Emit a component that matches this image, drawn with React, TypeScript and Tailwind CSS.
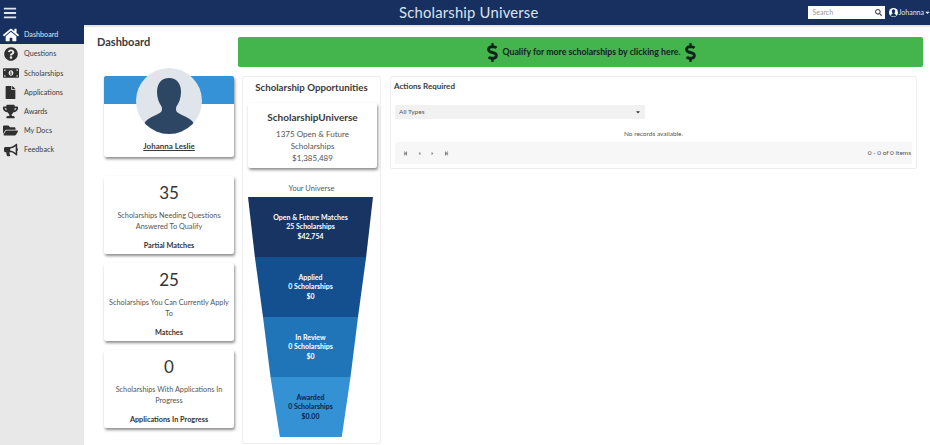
import {
  FaBars,
  FaBullhorn,
  FaDollarSign,
  FaFile,
  FaFolderOpen,
  FaHome,
  FaMoneyBillAlt,
  FaQuestionCircle,
  FaSearch,
  FaTrophy,
  FaCaretDown,
  FaStepBackward,
  FaCaretLeft,
  FaCaretRight,
  FaStepForward,
} from "react-icons/fa"

const navItems = [
  { label: "Dashboard", icon: FaHome, size: "text-[16px]" },
  { label: "Questions", icon: FaQuestionCircle, size: "text-[14px]" },
  { label: "Scholarships", icon: FaMoneyBillAlt, size: "text-[16px]" },
  { label: "Applications", icon: FaFile, size: "text-[13px]" },
  { label: "Awards", icon: FaTrophy, size: "text-[15px]" },
  { label: "My Docs", icon: FaFolderOpen, size: "text-[15px]" },
  { label: "Feedback", icon: FaBullhorn, size: "text-[14px]" },
]

const statCards = [
  {
    count: "35",
    text: "Scholarships Needing Questions Answered To Qualify",
    label: "Partial Matches",
  },
  {
    count: "25",
    text: "Scholarships You Can Currently Apply To",
    label: "Matches",
  },
  {
    count: "0",
    text: "Scholarships With Applications In Progress",
    label: "Applications In Progress",
  },
]

const funnel = [
  {
    lines: ["Open & Future Matches", "25 Scholarships", "$42,754"],
    className:
      "bg-[#183462] text-white [clip-path:polygon(0_0,100%_0,94.5%_100%,5.5%_100%)]",
  },
  {
    lines: ["Applied", "0 Scholarships", "$0"],
    className:
      "bg-[#14508f] text-white [clip-path:polygon(5.5%_0,94.5%_0,88%_100%,12%_100%)]",
  },
  {
    lines: ["In Review", "0 Scholarships", "$0"],
    className:
      "bg-[#2075b8] text-white [clip-path:polygon(12%_0,88%_0,82%_100%,18%_100%)]",
  },
  {
    lines: ["Awarded", "0 Scholarships", "$0.00"],
    className:
      "bg-[#3391d4] text-[#10233f] [clip-path:polygon(18%_0,82%_0,75%_100%,25.500%_100%)]",
  },
]

const cardShadow = "shadow-[1px_2px_3px_rgba(0,0,0,0.45)]"

const App = () => {
  return (
    <div className="flex h-[445px] w-[930px] flex-col overflow-hidden bg-white font-['Lato',sans-serif] text-[#444]">
      <header className="flex h-[25px] shrink-0 items-center bg-[#17305f] text-white">
        <FaBars className="ml-[3px] text-[14px] text-[#dfe6f0]" />
        <div className="ml-[382px] text-[14.800px] leading-none tracking-[0.2px] text-[#dbe3ee]">
          Scholarship Universe
        </div>
        <div className="ml-auto flex items-center">
          <div className="flex h-[13px] w-[77px] items-center justify-between bg-white pl-[5px] pr-[3px]">
            <span className="text-[7px] text-[#999]">Search</span>
            <FaSearch className="text-[7px] text-[#444]" />
          </div>
          <svg viewBox="0 0 10 10" className="ml-[4px] h-[9px] w-[9px]">
            <circle cx="5" cy="5" r="5" fill="#fff" />
            <path d="M5 1.5c1.2 0 1.9 1 1.9 2.2 0 .9-.4 1.6-.8 2l.1.8L8.5 8A5 5 0 0 1 1.5 8l2.3-1.5.1-.8c-.4-.4-.8-1.1-.8-2C3.100 2.500 3.800 1.500 5 1.500Z" fill="#17305f" />
          </svg>
          <span className="ml-[1px] text-[7px] text-[#dfe6f0]">Johanna</span>
          <FaCaretDown className="mr-[-1px] text-[7px]" />
        </div>
      </header>

      <div className="flex min-h-0 flex-1">
        <nav className="w-[84px] shrink-0 bg-[#e8e8e8]">
          {navItems.map((item, i) => {
            const Icon = item.icon
            return (
              <div
                key={item.label}
                className={`flex h-[19.2px] items-center ${
                  i === 0 ? "bg-[#17305f] text-[#dfe6f0]" : "text-[#3d3d3d]"
                }`}
              >
                <div className={`flex w-[21px] shrink-0 justify-center ${item.size} ${i === 0 ? "text-white" : "text-[#2f2f2f]"}`}>
                  <Icon />
                </div>
                <span className="ml-[3px] mt-[2px] text-[7.200px]">{item.label}</span>
              </div>
            )
          })}
        </nav>

        <main className="min-w-0 flex-1 border-t-2 border-[#e6e6ea] pl-[13px] pr-[7px]">
          <div className="mt-[10px] flex items-start">
            <h1 className="mt-[-3px] w-[141px] shrink-0 text-[11px] font-bold text-[#3a3a3a]">
              Dashboard
            </h1>
            <div className="flex h-[30px] w-[685px] items-center justify-center rounded-[2px] bg-[#43b54c] pl-[22px] text-[#10231a]">
              <FaDollarSign className="text-[19px]" />
              <span className="text-[8.750px] font-bold">
                Qualify for more scholarships by clicking here.
              </span>
              <FaDollarSign className="text-[19px]" />
            </div>
          </div>

          <div className="mt-[9px] flex items-start">
            <div className="ml-[7px] w-[130px] shrink-0">
              <div className={`relative h-[81px] rounded-[2px] bg-white ${cardShadow}`}>
                <div className="h-[28px] rounded-t-[2px] bg-[#3592d6]" />
                <div className="absolute left-[32px] top-[-8px] h-[66px] w-[66px] overflow-hidden rounded-full bg-[#dfe5ea]">
                  <svg viewBox="0 0 66 66" className="h-full w-full">
                    <path
                      d="M33 10c8 0 12 6 12 14 0 6-2 11-4.500 14.500-.7 1-.7 4 .5 5.500 3 2.500 11 5 15 9 2 2 3.500 5 5 9.500L33 70 5 62.500c1.500-4.500 3-7.500 5-9.500 4-4 12-6.500 15-9 1.200-1.500 1.200-4.500.5-5.500C23 35 21 30 21 24 21 16 25 10 33 10Z"
                      fill="#2d4663"
                    />
                  </svg>
                </div>
                <div className="pt-[36px] text-center text-[8px] font-bold text-[#3a3a3a] underline">
                  Johanna Leslie
                </div>
              </div>

              <div className="mt-[19px] flex flex-col gap-[9px]">
                {statCards.map((card) => (
                  <div
                    key={card.label}
                    className={`flex h-[78px] flex-col items-center rounded-[2px] bg-white px-[3px] text-center ${cardShadow}`}
                  >
                    <div className="mt-[7px] text-[17px] leading-[20px] text-[#333]">
                      {card.count}
                    </div>
                    <div className="mt-[8px] h-[22px] text-[7.300px] leading-[10.500px] text-[#555]">
                      {card.text}
                    </div>
                    <div className="mt-[8px] text-[7.300px] font-bold leading-[10px] text-[#333]">
                      {card.label}
                    </div>
                  </div>
                ))}
              </div>
            </div>

            <section className="ml-[8px] h-[368px] w-[139px] shrink-0 rounded-[2px] border border-[#eeeeee] bg-white px-[5px]">
              <h2 className="mt-[3px] text-center text-[9.700px] font-bold leading-[14px] text-[#3a3a3a]">
                Scholarship Opportunities
              </h2>
              <div className={`mt-[9px] h-[65px] w-[129px] rounded-[2px] bg-white px-[8px] pt-[8px] text-center ${cardShadow}`}>
                <div className="text-[10px] font-bold leading-[13px] text-[#3a3a3a]">
                  ScholarshipUniverse
                </div>
                <div className="mt-[4px] text-[8px] leading-[12px] text-[#555]">
                  1375 Open &amp; Future Scholarships
                  <br />
                  $1,385,489
                </div>
              </div>
              <div className="mt-[16px] text-center text-[7.500px] leading-[10px] text-[#555]">
                Your Universe
              </div>
              <div className="mt-[3px] flex w-[125px] flex-col">
                {funnel.map((seg) => (
                  <div
                    key={seg.lines[0]}
                    className={`flex h-[60px] flex-col items-center justify-center text-[7px] font-bold leading-[9.500px] ${seg.className}`}
                  >
                    {seg.lines.map((line) => (
                      <div key={line}>{line}</div>
                    ))}
                  </div>
                ))}
              </div>
            </section>

            <section className="ml-[9px] h-[93px] w-[527px] shrink-0 rounded-[2px] border border-[#eeeeee] bg-white px-[3px]">
              <h2 className="mt-[4px] text-[8px] font-bold leading-[10px] text-[#3a3a3a]">
                Actions Required
              </h2>
              <div className="ml-[1px] mt-[14px] flex h-[14px] w-[250px] items-center justify-between bg-[#f1f1f1] pl-[4px] pr-[4px] text-[6.500px] text-[#555]">
                <span>All Types</span>
                <FaCaretDown className="text-[6px] text-[#333]" />
              </div>
              <div className="ml-[1px] mt-[7px] flex h-[16px] w-[517px] items-center justify-center bg-white text-[6.500px] text-[#555]">
                No records available.
              </div>
              <div className="ml-[1px] flex h-[22px] w-[517px] items-center justify-between bg-[#f7f7f7] pl-[8px] pr-[1px] text-[6.500px] text-[#555]">
                <div className="flex items-center gap-[8.500px] text-[5px] text-[#888]">
                  <FaStepBackward />
                  <FaCaretLeft />
                  <FaCaretRight />
                  <FaStepForward />
                </div>
                <span>0 - 0 of 0 items</span>
              </div>
            </section>
          </div>
        </main>
      </div>
    </div>
  )
}

export default App
